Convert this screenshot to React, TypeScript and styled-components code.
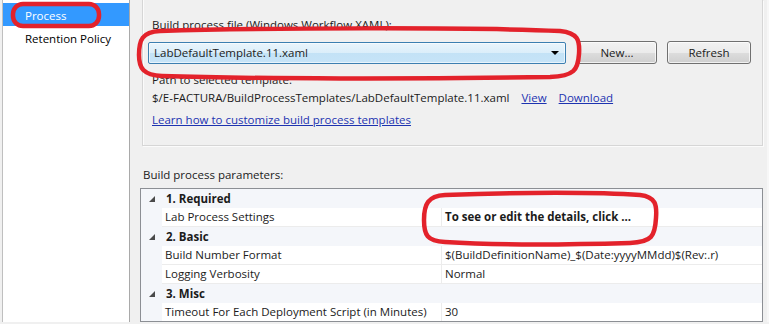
import React, { FC } from 'react';
import styled, { createGlobalStyle } from 'styled-components';

const GlobalStyle = createGlobalStyle`
  html, body {
    margin: 0;
    padding: 0;
    background: #f0f0f0;
  }
  * {
    box-sizing: border-box;
  }
`;

const Screen = styled.div`
  position: relative;
  display: flex;
  width: 769px;
  height: 324px;
  padding-bottom: 2px;
  overflow: hidden;
  background: #f0f0f0;
  font-family: 'Open Sans', 'Noto Sans', sans-serif;
  font-size: 11.5px;
  color: #1b1b1b;
`;

const Sidebar = styled.nav`
  display: flex;
  flex-direction: column;
  width: 128px;
  margin-left: 2px;
  padding-top: 3px;
  background: #ffffff;
  border-left: 1px solid #bfbfbf;
  border-right: 1px solid #a9a9a9;
`;

interface INavItem {
  selected?: boolean;
}

const NavItem = styled.div<INavItem>`
  height: 23px;
  padding-left: 22px;
  line-height: 25px;
  color: ${({ selected }) => (selected ? '#ffffff' : '#000000')};
  background: ${({ selected }) => (selected ? '#3399ff' : 'transparent')};
`;

const Main = styled.main`
  display: flex;
  flex-direction: column;
  flex: 1;
  min-height: 0;
  padding-left: 10px;
`;

const GroupBox = styled.section`
  display: flex;
  flex-direction: column;
  flex-shrink: 0;
  height: 146px;
  margin-left: 2px;
  padding: 17px 5px 0 5px;
  border: 1px solid #d6d6d6;
  border-top: none;
  box-shadow: inset 1px 0 0 #fbfbfb, 1px 1px 0 #fbfbfb;
`;

const FieldLabel = styled.div`
  height: 16px;
  padding-left: 4px;
  line-height: 16px;
`;

const ComboRow = styled.div`
  display: flex;
  align-items: center;
  gap: 11px;
  margin-top: 8px;
`;

const Combo = styled.div`
  display: flex;
  align-items: center;
  width: 418px;
  height: 22px;
  padding-left: 5px;
  border: 1px solid #3c7fb1;
  border-radius: 2px;
  background: linear-gradient(#eaf5fc 0%, #dbeefa 50%, #c3e2f6 51%, #c6e4f8 100%);
  box-shadow: inset 0 0 0 1px rgba(255, 255, 255, 0.6);
`;

const ComboText = styled.span`
  flex: 1;
`;

const ComboArrow = styled.span`
  width: 0;
  height: 0;
  margin-right: 6px;
  border-left: 4px solid transparent;
  border-right: 4px solid transparent;
  border-top: 4px solid #000000;
`;

interface IButton {
  width: number;
}

const Button = styled.button<IButton>`
  width: ${({ width }) => width}px;
  height: 23px;
  margin-left: ${({ width }) => (width > 82 ? -1 : 0)}px;
  padding: 0;
  border: 1px solid #707070;
  border-radius: 3px;
  background: linear-gradient(#f2f2f2 0%, #ebebeb 50%, #dddddd 51%, #cfcfcf 100%);
  box-shadow: inset 0 0 0 1px rgba(255, 255, 255, 0.7);
  font-family: inherit;
  font-size: 11.5px;
  color: #1b1b1b;
`;

const TextLine = styled.div`
  display: flex;
  gap: 12px;
  height: 18px;
  padding-left: 4px;
  line-height: 18px;
  white-space: nowrap;
`;

const PathHeading = styled(TextLine)`
  margin-top: 7px;
`;

const LearnLine = styled(TextLine)`
  margin-top: 4px;
`;

const Link = styled.a`
  color: #1d33b0;
  text-decoration: underline;
`;

const SectionLabel = styled.div`
  flex-shrink: 0;
  height: 16px;
  margin-top: 21px;
  padding-left: 3px;
  line-height: 16px;
`;

const PropertyGrid = styled.div`
  display: flex;
  flex-direction: column;
  flex: 1;
  min-height: 0;
  overflow: hidden;
  margin-top: 5px;
  border: 1px solid #8c8f94;
  background: #f4f6fa;
`;

const CategoryRow = styled.div`
  display: flex;
  flex-shrink: 0;
  align-items: center;
  height: 19px;
  padding-left: 8px;
  font-weight: 700;
`;

const Expander = styled.svg`
  width: 6px;
  height: 6px;
  margin-right: 11px;
`;

const ItemRow = styled.div`
  display: flex;
  flex-shrink: 0;
  height: 19px;
  padding-left: 21px;
`;

interface ICell {
  bold?: boolean;
}

const LabelCell = styled.div`
  width: 280px;
  padding-left: 3px;
  line-height: 18px;
  background: #ffffff;
  border-bottom: 1px solid #ececec;
  border-right: 1px solid #ececec;
  white-space: nowrap;
`;

const ValueCell = styled.div<ICell>`
  flex: 1;
  padding-left: 3px;
  line-height: 18px;
  background: #ffffff;
  border-bottom: 1px solid #ececec;
  font-weight: ${({ bold }) => (bold ? 700 : 400)};
  white-space: nowrap;
`;

const EdgeStrip = styled.div`
  width: 6px;
  box-shadow: inset -2px 0 0 #f7f7f7;
`;

const Annotations = styled.svg`
  position: absolute;
  inset: 0;
  width: 769px;
  height: 324px;
  pointer-events: none;
`;

const Category: FC<{ title: string }> = ({ title }) => (
  <CategoryRow>
    <Expander viewBox='0 0 6 6'>
      <polygon points='6,0 6,6 0,6' fill='#4a4a4a' />
    </Expander>
    {title}
  </CategoryRow>
);

const Item: FC<{ label: string; value: string; bold?: boolean }> = ({ label, value, bold }) => (
  <ItemRow>
    <LabelCell>{label}</LabelCell>
    <ValueCell bold={bold}>{value}</ValueCell>
  </ItemRow>
);

export default function App() {
  return (
    <Screen>
      <GlobalStyle />
      <Sidebar>
        <NavItem selected>Process</NavItem>
        <NavItem>Retention Policy</NavItem>
      </Sidebar>

      <Main>
        <GroupBox>
          <FieldLabel>Build process file (Windows Workflow XAML):</FieldLabel>
          <ComboRow>
            <Combo>
              <ComboText>LabDefaultTemplate.11.xaml</ComboText>
              <ComboArrow />
            </Combo>
            <Button width={80}>New...</Button>
            <Button width={84}>Refresh</Button>
          </ComboRow>
          <PathHeading>Path to selected template:</PathHeading>
          <TextLine>
            <span>$/E-FACTURA/BuildProcessTemplates/LabDefaultTemplate.11.xaml</span>
            <Link>View</Link>
            <Link>Download</Link>
          </TextLine>
          <LearnLine>
            <Link>Learn how to customize build process templates</Link>
          </LearnLine>
        </GroupBox>

        <SectionLabel>Build process parameters:</SectionLabel>
        <PropertyGrid>
          <Category title='1. Required' />
          <Item label='Lab Process Settings' value='To see or edit the details, click ...' bold />
          <Category title='2. Basic' />
          <Item label='Build Number Format' value='$(BuildDefinitionName)_$(Date:yyyyMMdd)$(Rev:.r)' />
          <Item label='Logging Verbosity' value='Normal' />
          <Category title='3. Misc' />
          <Item label='Timeout For Each Deployment Script (in Minutes)' value='30' />
        </PropertyGrid>
      </Main>
      <EdgeStrip />

      <Annotations viewBox='0 0 769 324'>
        <g fill='none' stroke='#e3222b' strokeWidth='4.5' strokeLinejoin='round'>
          <rect x='13' y='4' width='86' height='22' rx='10' />
          <path d='M160 31 C 260 28, 470 27, 560 31 C 578 33, 580 40, 579 54 C 578 70, 574 76, 550 77 C 420 79, 250 79, 162 76 C 143 75, 139 68, 139 55 C 139 40, 142 32, 160 31 Z' />
          <path d='M445 195 C 520 192, 600 192, 640 195 C 656 197, 657 205, 656 218 C 655 236, 652 242, 630 243 C 560 245, 490 245, 445 242 C 427 241, 424 235, 424 220 C 424 204, 428 196, 445 195 Z' />
        </g>
      </Annotations>
    </Screen>
  );
}
